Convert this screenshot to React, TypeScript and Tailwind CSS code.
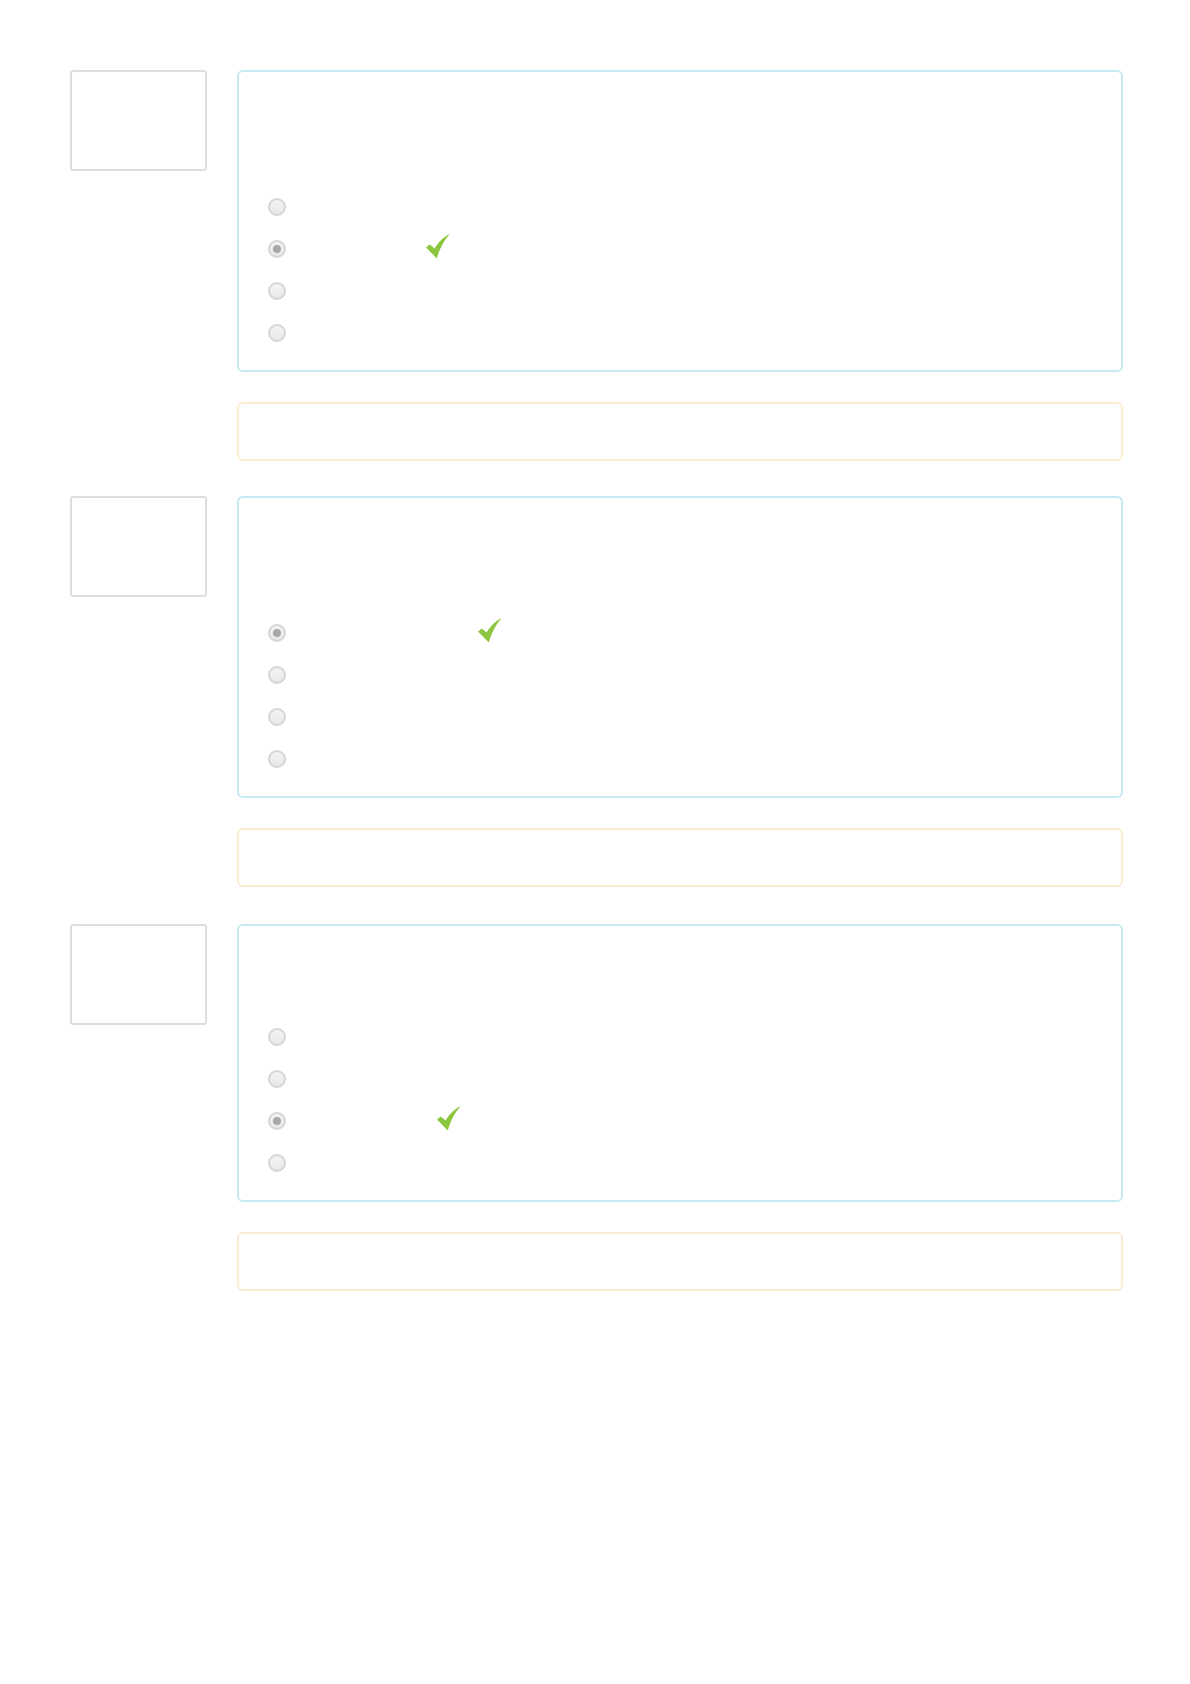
import React from 'react';

type Question = {
  id: number;
  questionHeight: number;
  selected: number;
  checkOffset: number;
  spaceBefore: number;
};

// questions whose text is empty in the captured state
const QUESTIONS: Question[] = [
  { id: 1, questionHeight: 114, selected: 1, checkOffset: 140, spaceBefore: 0 },
  { id: 2, questionHeight: 114, selected: 0, checkOffset: 192, spaceBefore: 35 },
  { id: 3, questionHeight: 90, selected: 2, checkOffset: 151, spaceBefore: 37 },
];

function CheckMark() {
  return (
    <svg width="24" height="25" viewBox="0 0 24 25" className="block -mt-[6px]">
      <path d="M0 13.4 L3.8 10.4 L8.6 14.4 C12 8.6 17 3.2 23.8 0 C18.4 6 14.2 13.2 10.8 24.4 Z" fill="#8cc63e" />
    </svg>
  );
}

function Radio({ checked }: { checked: boolean }) {
  return (
    <span className="w-[18px] h-[18px] shrink-0 rounded-full border-2 border-[#d6d6d6] bg-gradient-to-b from-[#f4f4f4] to-[#e8e8e8] flex items-center justify-center">
      {checked && <span className="w-2 h-2 rounded-full bg-[#a8a8a8]" />}
    </span>
  );
}

function QuestionBlock({ q }: { q: Question }) {
  return (
    <div className="flex gap-[30px]" style={{ marginTop: q.spaceBefore }}>
      <div className="w-[137px] h-[101px] shrink-0 border-2 border-[#dedede] rounded-[3px] bg-white" />
      <div className="flex-1">
        <div className="border-2 border-[#c5e9f3] rounded-md pl-[29px] pr-6 pb-4 bg-white">
          <div style={{ height: q.questionHeight }} />
          <div className="flex flex-col">
            {[0, 1, 2, 3].map((i) => (
              <div key={i} className="h-[42px] flex items-center">
                <Radio checked={i === q.selected} />
                {i === q.selected && (
                  <span style={{ marginLeft: q.checkOffset }}>
                    <CheckMark />
                  </span>
                )}
              </div>
            ))}
          </div>
        </div>
        <div className="mt-[30px] h-[59px] border-2 border-[#fdecd4] rounded-md bg-white" />
      </div>
    </div>
  );
}

export default function App() {
  return (
    <div className="min-h-screen bg-white font-['Liberation_Sans',Arial,sans-serif]">
      <div className="w-[1053px] ml-[70px] pt-[70px] flex flex-col">
        {QUESTIONS.map((q) => (
          <QuestionBlock key={q.id} q={q} />
        ))}
      </div>
    </div>
  );
}
